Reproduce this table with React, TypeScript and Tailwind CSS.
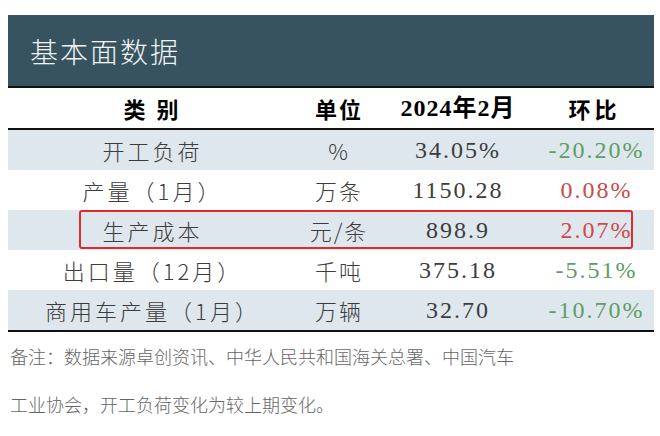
import React from 'react';

interface Row {
  name: string;
  unit: string;
  value: string;
  change: string;
  up: boolean;
  shaded: boolean;
  boxed?: boolean;
}

const rows: Row[] = [
  { name: '开工负荷', unit: '%', value: '34.05%', change: '-20.20%', up: false, shaded: true },
  { name: '产量（1月）', unit: '万条', value: '1150.28', change: '0.08%', up: true, shaded: false },
  { name: '生产成本', unit: '元/条', value: '898.9', change: '2.07%', up: true, shaded: true, boxed: true },
  { name: '出口量（12月）', unit: '千吨', value: '375.18', change: '-5.51%', up: false, shaded: false },
  { name: '商用车产量（1月）', unit: '万辆', value: '32.70', change: '-10.70%', up: false, shaded: true },
];

const cols = 'grid grid-cols-[289px_84px_154px_119px] items-center';
const serif = "font-['Liberation_Serif','DejaVu_Serif','Noto_Sans_CJK_SC',serif]";
const cjk = "font-['Noto_Sans_CJK_SC',sans-serif]";

export default function App() {
  return (
    <div className="w-[660px] h-[436px] bg-white pt-[15px]">
      <div className="mx-[8px] w-[646px]">
        {/* Title */}
        <div className="h-[71px] bg-[#36535f] flex items-center pl-[22px]">
          <span className={`${cjk} text-[28px] font-light tracking-[2px] text-[#f2f2f2]`}>基本面数据</span>
        </div>

        {/* Header */}
        <div className={`${cols} h-[44px] border-y-2 border-[#111] text-[22px] font-bold text-black`}>
          <div className={`${cjk} text-center tracking-[3px]`}>类 别</div>
          <div className={`${cjk} text-center tracking-[2px]`}>单位</div>
          <div className={`${serif} text-center text-[24px] tracking-[1px]`}>2024年2月</div>
          <div className={`${cjk} text-center tracking-[4px]`}>环比</div>
        </div>

        {/* Body */}
        <div className="border-b-2 border-[#111]">
          {rows.map((r) => (
            <div
              key={r.name}
              className={`${cols} relative h-[40px] ${r.shaded ? 'bg-[#dfe7ee]' : 'bg-white'}`}
            >
              <div className={`${cjk} text-center text-[22px] font-light tracking-[3px] text-[#3c3c3c]`}>{r.name}</div>
              <div className={`${cjk} text-center text-[22px] font-light tracking-[2px] text-[#3c3c3c]`}>{r.unit}</div>
              <div className={`${serif} text-center text-[24px] tracking-[2px] text-[#3c3c3c]`}>{r.value}</div>
              <div
                className={`${serif} text-center text-[24px] tracking-[2px] pl-[4px] ${
                  r.up ? 'text-[#cc4a4a]' : 'text-[#5d9e63]'
                }`}
              >
                {r.change}
              </div>
              {r.boxed && (
                <div className="absolute left-[71px] right-[21px] top-0 bottom-[1px] border-2 border-[#e02a2a] rounded-[3px]" />
              )}
            </div>
          ))}
        </div>
      </div>

      {/* Note */}
      <p className={`${cjk} pl-[10px] text-[18px] leading-[48px] font-light text-[#666]`}>
        备注：数据来源卓创资讯、中华人民共和国海关总署、中国汽车
        <br />
        工业协会，开工负荷变化为较上期变化。
      </p>
    </div>
  );
}
